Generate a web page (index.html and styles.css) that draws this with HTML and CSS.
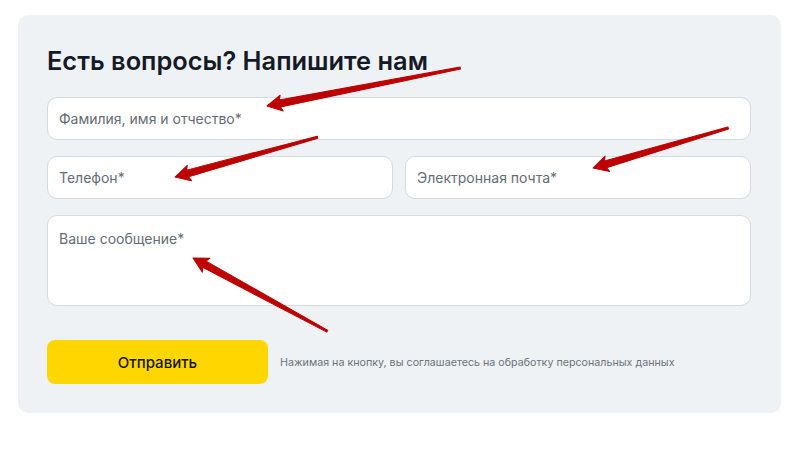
FILE: index.html
```html
<!DOCTYPE html>
<html lang="ru">
<head>
  <meta charset="utf-8">
  <link rel="stylesheet" href="styles.css">
</head>
<body>
  <div class="page">
    <form class="feedback">
      <h2>Есть вопросы? Напишите нам</h2>

      <input class="field" type="text" placeholder="Фамилия, имя и отчество*">

      <div class="row">
        <input class="field" type="tel" placeholder="Телефон*">
        <input class="field" type="email" placeholder="Электронная почта*">
      </div>

      <textarea class="field message" placeholder="Ваше сообщение*"></textarea>

      <div class="actions">
        <button type="button" class="submit">Отправить</button>
        <span class="agree">Нажимая на кнопку, вы соглашаетесь на обработку персональных данных</span>
      </div>
    </form>

    <!-- annotation arrows drawn over the form -->
    <svg class="arrows" width="800" height="450" viewBox="0 0 800 450">
      <g transform="translate(267 106) rotate(-11.1)">
        <polygon points="0,0 15,-8 13,-3.5 197,-1 197,1 13,3.5 15,8" />
      </g>
      <g transform="translate(175 177) rotate(-15.6)">
        <polygon points="0,0 15,-8 13,-3.5 148,-1 148,1 13,3.5 15,8" />
      </g>
      <g transform="translate(593 168) rotate(-16.5)">
        <polygon points="0,0 15,-8 13,-3.5 141,-1 141,1 13,3.5 15,8" />
      </g>
      <g transform="translate(193 258) rotate(28.6)">
        <polygon points="0,0 15,-8 13,-3.5 153,-1 153,1 13,3.5 15,8" />
      </g>
    </svg>
  </div>
</body>
</html>
```

FILE: styles.css
```css
body {
  margin: 0;
  background: #ffffff;
  font-family: Inter, "Noto Sans", sans-serif;
}
.page {
  position: relative;
  width: 800px;
  height: 450px;
  padding: 15px 0 0 18px;
  box-sizing: border-box;
}
.feedback {
  width: 763px;
  height: 398px;
  box-sizing: border-box;
  padding: 30px 30px 29px 29px;
  background: #eef2f5;
  border-radius: 10px;
  display: flex;
  flex-direction: column;
  gap: 16px;
}
h2 {
  margin: 0 0 4px;
  font-size: 25.4px;
  line-height: 32px;
  font-weight: 600;
  color: #141a26;
}
.field {
  display: block;
  width: 100%;
  box-sizing: border-box;
  height: 43px;
  padding: 0 11px;
  margin: 0;
  border: 1px solid #d3dbe4;
  border-radius: 10px;
  background: #ffffff;
  font-family: Inter, "Noto Sans", sans-serif;
  font-size: 14px;
  color: #1f2937;
  outline: none;
}
.field::placeholder {
  color: #646c77;
  opacity: 1;
}
.row {
  display: grid;
  grid-template-columns: 1fr 1fr;
  gap: 12px;
}
.message {
  height: 91px;
  padding-top: 13px;
  resize: none;
  line-height: 20px;
}
.actions {
  display: flex;
  align-items: center;
  gap: 12px;
  margin-top: 18px;
}
.submit {
  width: 221px;
  height: 44px;
  border: none;
  border-radius: 8px;
  background: #ffd600;
  color: #141414;
  font-family: Inter, "Noto Sans", sans-serif;
  font-size: 15px;
  font-weight: 500;
  cursor: pointer;
}
.agree {
  font-size: 10.7px;
  color: #6b7280;
}
.arrows {
  position: absolute;
  top: 0;
  left: 0;
  pointer-events: none;
}
.arrows polygon {
  fill: #bd0000;
  stroke: #bd0000;
  stroke-width: 1;
  stroke-linejoin: round;
}
```
